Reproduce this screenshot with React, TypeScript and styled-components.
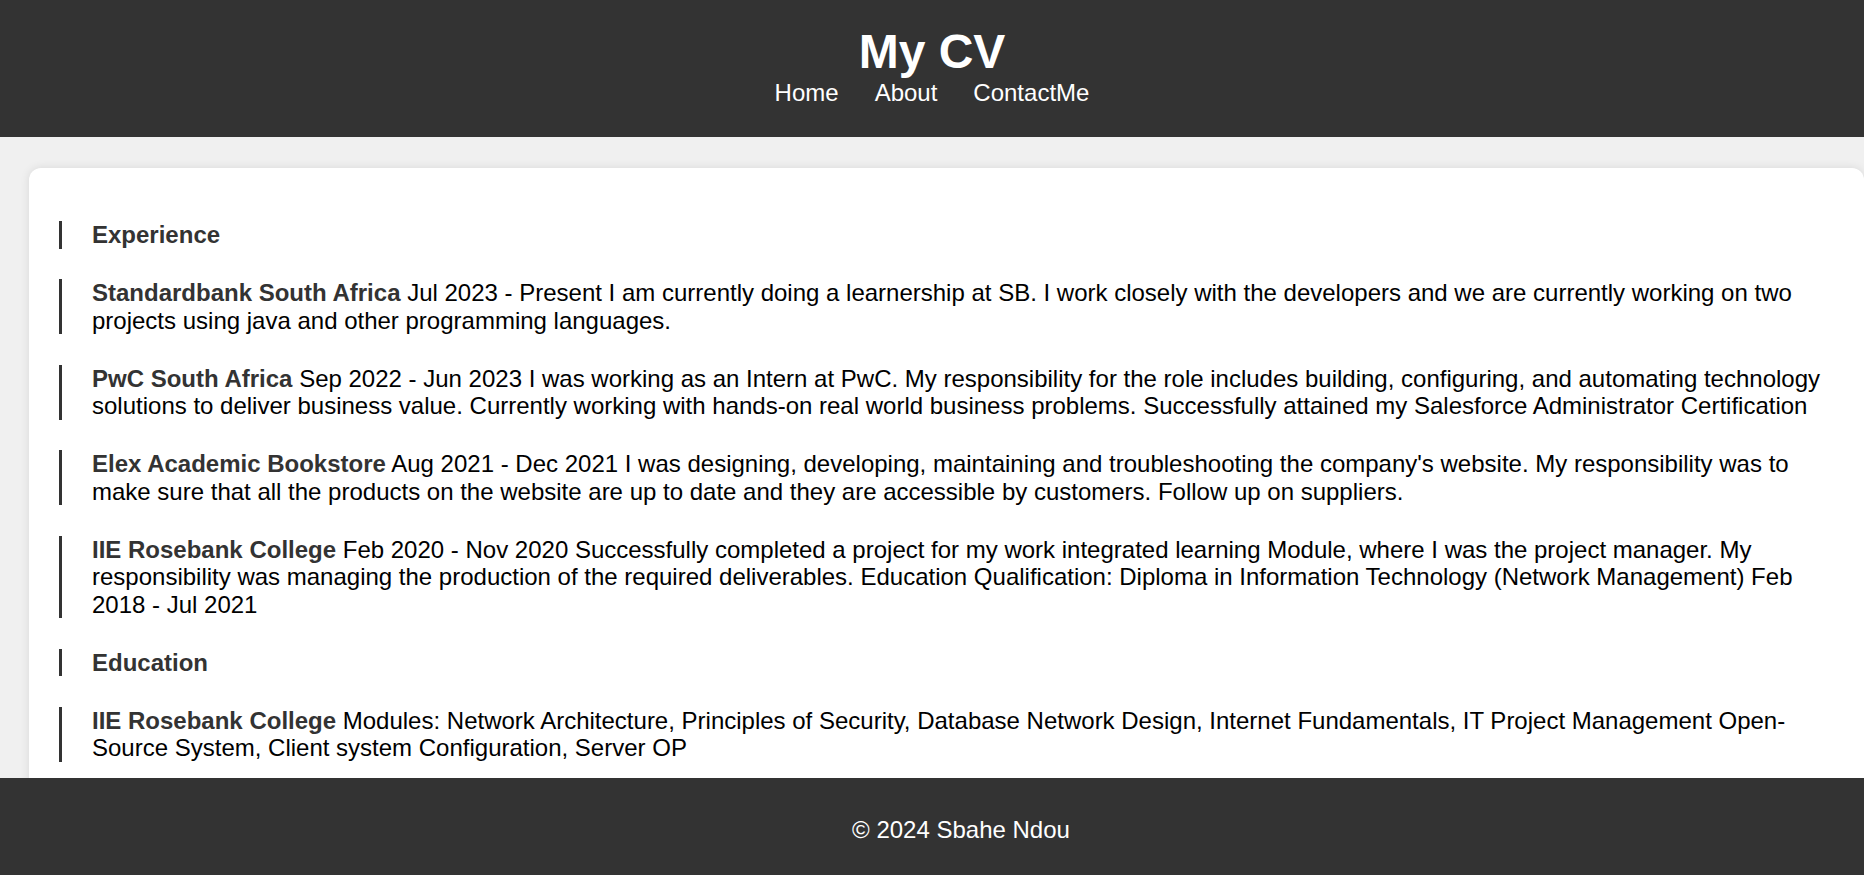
import React from 'react';
import styled, { createGlobalStyle } from 'styled-components';

type EntryType = {
   name: string;
   text: string;
};

const experience: EntryType[] = [
   {
      name: 'Standardbank South Africa',
      text: 'Jul 2023 - Present I am currently doing a learnership at SB. I work closely with the developers and we are currently working on two projects using java and other programming languages.',
   },
   {
      name: 'PwC South Africa',
      text: 'Sep 2022 - Jun 2023 I was working as an Intern at PwC. My responsibility for the role includes building, configuring, and automating technology solutions to deliver business value. Currently working with hands-on real world business problems. Successfully attained my Salesforce Administrator Certification',
   },
   {
      name: 'Elex Academic Bookstore',
      text: "Aug 2021 - Dec 2021 I was designing, developing, maintaining and troubleshooting the company's website. My responsibility was to make sure that all the products on the website are up to date and they are accessible by customers. Follow up on suppliers.",
   },
   {
      name: 'IIE Rosebank College',
      text: 'Feb 2020 - Nov 2020 Successfully completed a project for my work integrated learning Module, where I was the project manager. My responsibility was managing the production of the required deliverables. Education Qualification: Diploma in Information Technology (Network Management) Feb 2018 - Jul 2021',
   },
];

const education: EntryType[] = [
   {
      name: 'IIE Rosebank College',
      text: 'Modules: Network Architecture, Principles of Security, Database Network Design, Internet Fundamentals, IT Project Management Open-Source System, Client system Configuration, Server OP',
   },
];

export default function App() {
   return (
      <>
         <GlobalStyle />
         <Header>
            <Title>My CV</Title>
            <Nav>
               <NavLink href={'#'}>Home</NavLink>
               <NavLink href={'#'}>About</NavLink>
               <NavLink href={'#'}>ContactMe</NavLink>
            </Nav>
         </Header>
         <Card>
            <Entry>
               <Heading>Experience</Heading>
            </Entry>
            {experience.map((item, i) => (
               <Entry key={i}>
                  <Name>{item.name}</Name> {item.text}
               </Entry>
            ))}
            <Entry>
               <Heading>Education</Heading>
            </Entry>
            {education.map((item, i) => (
               <Entry key={i}>
                  <Name>{item.name}</Name> {item.text}
               </Entry>
            ))}
         </Card>
         <Footer>&copy; 2024 Sbahe Ndou</Footer>
      </>
   );
}

const GlobalStyle = createGlobalStyle`
   body {
      margin: 0;
      background-color: #f0f0f0;
      font-family: "Liberation Sans", Arial, sans-serif;
      overflow: hidden;
   }
`;

const Header = styled.header`
   background-color: #333;
   color: #fff;
   text-align: center;
   padding: 25px 0 30px;
`;

const Title = styled.h1`
   margin: 0;
   font-size: 48px;
   line-height: 54px;
   font-weight: bold;
`;

const Nav = styled.nav`
   display: flex;
   justify-content: center;
   gap: 36px;
`;

const NavLink = styled.a`
   color: #fff;
   text-decoration: none;
   font-size: 24px;
   line-height: 28px;
`;

const Card = styled.main`
   background-color: #fff;
   border-radius: 12px;
   margin: 31px 0 0 29px;
   padding: 53px 30px 140px;
   box-shadow: 0 0 10px rgba(0, 0, 0, 0.1);
`;

const Entry = styled.div`
   border-left: 3px solid #333;
   padding-left: 30px;
   margin-bottom: 30.5px;
   font-size: 24px;
   line-height: 27.5px;
   color: #000;
`;

const Heading = styled.h3`
   margin: 0;
   font-size: 24px;
   color: #333;
   font-weight: bold;
`;

const Name = styled.strong`
   color: #333;
`;

const Footer = styled.footer`
   position: fixed;
   left: 0;
   bottom: 0;
   width: 100%;
   padding: 38px 29px 31px;
   background-color: #333;
   color: #fff;
   text-align: center;
   font-size: 24px;
   line-height: 28px;
`;
